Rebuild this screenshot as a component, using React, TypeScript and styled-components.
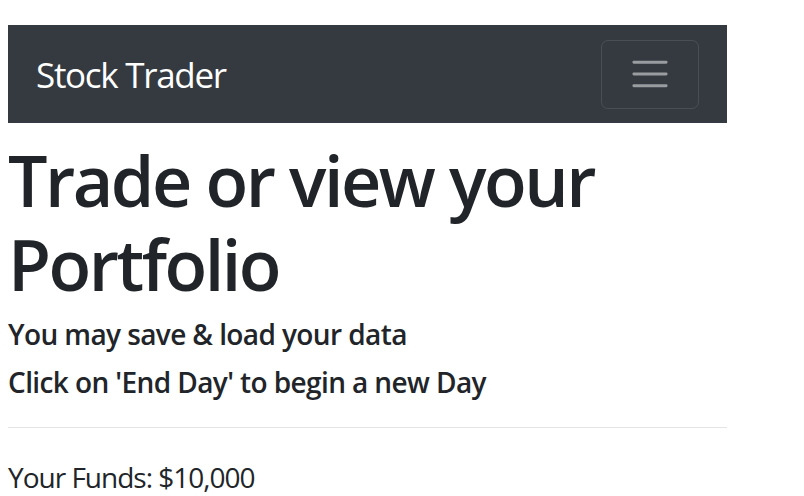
import React from "react";
import styled, { createGlobalStyle } from "styled-components";

const Global = createGlobalStyle`
  html, body { margin: 0; padding: 0; background: #fff; }
  body {
    font-family: "Open Sans", "Noto Sans", sans-serif;
    color: #212529;
    font-size: 28px;
    line-height: 1.5;
  }
  * { box-sizing: border-box; }
`;

const Page = styled.div`
  width: 727px;
  padding: 25px 0 0 8px;
`;

const Navbar = styled.nav`
  background: #343a40;
  height: 98px;
  padding: 14px 28px;
  display: flex;
  align-items: center;
  justify-content: space-between;
`;

const Brand = styled.span`
  color: #fff;
  font-size: 35px;
  line-height: 1;
  letter-spacing: -1.3px;
`;

const Toggler = styled.button`
  width: 98px;
  height: 69px;
  background: transparent;
  border: 1px solid rgba(255, 255, 255, 0.1);
  border-radius: 7px;
  display: flex;
  align-items: center;
  justify-content: center;
  padding: 0;
`;

const Title = styled.h1`
  margin: 15px 0 12px;
  font-size: 70px;
  font-weight: 600;
  line-height: 84px;
  letter-spacing: -2.5px;
`;

const Sub = styled.h6`
  margin: 0 0 14px;
  font-size: 28px;
  font-weight: 600;
  line-height: 33.6px;
  letter-spacing: -0.6px;
`;

const Rule = styled.hr`
  margin: 28px 0;
  border: 0;
  border-top: 1px solid rgba(0, 0, 0, 0.1);
`;

const Funds = styled.p`
  margin: 0;
  letter-spacing: -1px;
`;

export default function App() {
  return (
    <>
      <Global />
      <Page>
        <Navbar>
          <Brand>Stock Trader</Brand>
          <Toggler aria-label="Toggle navigation">
            <svg width="44" height="44" viewBox="0 0 30 30">
              <path
                stroke="rgba(255,255,255,0.5)"
                strokeWidth="2"
                strokeLinecap="round"
                strokeMiterlimit="10"
                d="M4 7h22M4 15h22M4 23h22"
              />
            </svg>
          </Toggler>
        </Navbar>
        <Title>Trade or view your Portfolio</Title>
        <Sub>You may save &amp; load your data</Sub>
        <Sub>Click on 'End Day' to begin a new Day</Sub>
        <Rule />
        <Funds>Your Funds: $10,000</Funds>
      </Page>
    </>
  );
}
